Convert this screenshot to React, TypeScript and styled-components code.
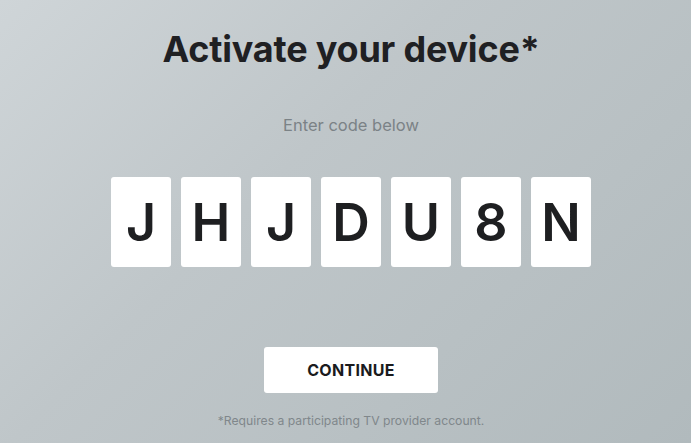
import React from "react";
import styled, { createGlobalStyle } from "styled-components";

const Global = createGlobalStyle`
  html, body { margin: 0; padding: 0; height: 100%; }
  body { font-family: "Inter", "Noto Sans", sans-serif; }
  #root { height: 100%; }
`;

const Page = styled.main`
  box-sizing: border-box;
  width: 691px;
  height: 443px;
  padding: 29px 0 0 11px;
  background: linear-gradient(135deg, #cfd5d8 0%, #bfc6c9 40%, #b1babd 100%);
  display: flex;
  flex-direction: column;
  align-items: center;
  overflow: hidden;
`;

const Title = styled.h1`
  margin: 0;
  font-size: 36px;
  font-weight: 700;
  color: #1f2023;
  letter-spacing: -0.2px;
  line-height: 40px;
`;

const Subtitle = styled.p`
  margin: 46px 0 0;
  font-size: 16.5px;
  color: #7b8286;
  line-height: 20px;
`;

const Code = styled.div`
  display: flex;
  gap: 10px;
  margin-top: 42px;
`;

const CodeBox = styled.div`
  width: 60px;
  height: 90px;
  background: #ffffff;
  border-radius: 3px;
  display: flex;
  align-items: center;
  justify-content: center;
  font-size: 52px;
  font-weight: 600;
  color: #1e1f21;
`;

const Button = styled.button`
  margin-top: 80px;
  width: 174px;
  height: 46px;
  border: none;
  border-radius: 3px;
  background: #ffffff;
  font-family: inherit;
  font-size: 16px;
  font-weight: 700;
  color: #1a1b1d;
  letter-spacing: 0.3px;
`;

const Note = styled.p`
  margin: 20px 0 0;
  font-size: 12.2px;
  color: #80878b;
`;

export default function App() {
  const code = "JHJDU8N".split("");
  return (
    <>
      <Global />
      <Page>
        <Title>Activate your device*</Title>
        <Subtitle>Enter code below</Subtitle>
        <Code>
          {code.map((c, i) => (
            <CodeBox key={i}>{c}</CodeBox>
          ))}
        </Code>
        <Button>CONTINUE</Button>
        <Note>*Requires a participating TV provider account.</Note>
      </Page>
    </>
  );
}
